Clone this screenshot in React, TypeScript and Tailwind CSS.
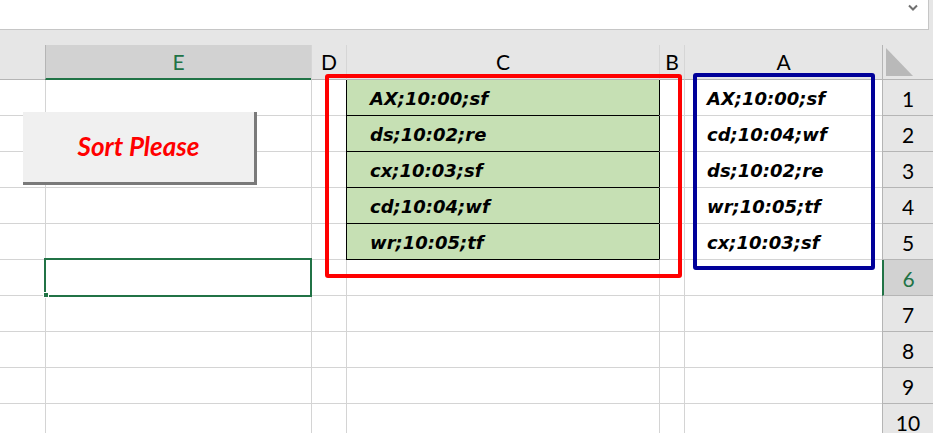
import React from 'react';

const widths = [45, 266, 35, 313, 25, 198, 51];
const letters = ['', 'E', 'D', 'C', 'B', 'A'];

const sorted = ['AX;10:00;sf', 'ds;10:02;re', 'cx;10:03;sf', 'cd;10:04;wf', 'wr;10:05;tf'];
const original = ['AX;10:00;sf', 'cd;10:04;wf', 'ds;10:02;re', 'wr;10:05;tf', 'cx;10:03;sf'];

const uiFont = { fontFamily: 'Lato, "Open Sans", sans-serif' };
const dataFont = { fontFamily: '"DejaVu Sans", Verdana, sans-serif' };

function HeaderRow() {
  return (
    <div className="flex h-[35px]">
      <div className="w-[45px] h-full border-b border-[#b5b5b5]" />
      {letters.slice(1).map((l, i) => {
        const active = l === 'E';
        return (
          <div
            key={l}
            style={{ width: widths[i + 1], ...uiFont }}
            className={`h-full flex items-center justify-center text-[21px] border-l ${
              active
                ? 'bg-[#d2d2d2] text-[#217346] border-l-[#b5b5b5] border-b-2 border-b-[#217346]'
                : 'text-black border-l-[#d6d6d6] border-b border-b-[#b5b5b5]'
            }`}
          >
            {l}
          </div>
        );
      })}
      <div className="w-[51px] h-full border-l border-b border-[#b5b5b5] pl-[3px] pt-[3px]">
        <svg width="27" height="28" viewBox="0 0 27 28">
          <polygon points="0,0 0,28 27,28" fill="#b9b9b9" />
        </svg>
      </div>
    </div>
  );
}

function Row({ n }: { n: number }) {
  const inTable = n >= 1 && n <= 5;
  const selected = n === 6;
  return (
    <div className="flex h-9 shrink-0">
      <div className="w-[45px] h-full border-b border-[#d4d4d4]" />
      <div className="w-[266px] h-full border-l border-b border-[#d4d4d4]" />
      <div className="w-[35px] h-full border-l border-b border-[#d4d4d4]" />
      <div
        style={dataFont}
        className={`w-[313px] h-full border-l border-b flex items-center pl-[23px] pt-[2px] text-[18px] font-bold italic text-black ${
          inTable ? 'bg-[#c6e0b4] border-black' : 'border-[#d4d4d4]'
        }`}
      >
        {inTable ? sorted[n - 1] : ''}
      </div>
      <div
        className={`w-[25px] h-full border-l border-b border-b-[#d4d4d4] ${
          inTable ? 'border-l-black' : 'border-l-[#d4d4d4]'
        }`}
      />
      <div
        style={dataFont}
        className="w-[198px] h-full border-l border-b border-[#d4d4d4] flex items-center pl-[22px] pt-[2px] text-[18px] font-bold italic text-black"
      >
        {inTable ? original[n - 1] : ''}
      </div>
      <div
        style={uiFont}
        className={`w-[51px] h-full border-b border-b-[#b5b5b5] flex items-center justify-center pt-[3px] text-[21px] ${
          selected
            ? 'bg-[#d2d2d2] text-[#217346] border-l-2 border-l-[#217346]'
            : 'bg-[#e6e6e6] text-black border-l border-l-[#b5b5b5]'
        }`}
      >
        {n}
      </div>
    </div>
  );
}

export default function App() {
  const rows = [1, 2, 3, 4, 5, 6, 7, 8, 9, 10];
  return (
    <div className="relative w-[933px] h-[433px] overflow-hidden bg-white">
      {/* formula bar */}
      <div className="flex h-[30px] bg-[#e6e6e6]">
        <div className="w-[929px] h-full bg-white border-b border-r border-[#c6c6c6] flex justify-end pr-[10px] pt-[4px]">
          <svg width="10" height="7" viewBox="0 0 10 7">
            <path d="M1 1.5 L5 5.5 L9 1.5" stroke="#707070" strokeWidth="2" fill="none" />
          </svg>
        </div>
      </div>
      <div className="h-[15px] bg-[#e6e6e6]" />

      <div className="bg-[#e6e6e6]">
        <HeaderRow />
      </div>

      <div className="flex flex-col">
        {rows.map((n) => (
          <Row key={n} n={n} />
        ))}
      </div>

      {/* form button */}
      <div
        style={uiFont}
        className="absolute left-[23px] top-[112px] w-[234px] h-[73px] bg-[#f0f0f0] border-r-[3px] border-b-[3px] border-[#7a7a7a] flex items-center justify-center pb-[2px] text-[26px] font-bold italic text-[#ff0000]"
      >
        Sort Please
      </div>

      {/* selected cell E6 */}
      <div className="absolute left-[44px] top-[258px] w-[268px] h-[39px] border-2 border-[#217346]" />
      <div className="absolute left-[43px] top-[292px] w-[6px] h-[6px] bg-[#217346] border border-white" />

      {/* annotation boxes */}
      <div className="absolute left-[325px] top-[74px] w-[357px] h-[204px] border-4 border-[#ff0000] rounded-[3px]" />
      <div className="absolute left-[693px] top-[73px] w-[182px] h-[197px] border-4 border-[#000099] rounded-[3px]" />
    </div>
  );
}
